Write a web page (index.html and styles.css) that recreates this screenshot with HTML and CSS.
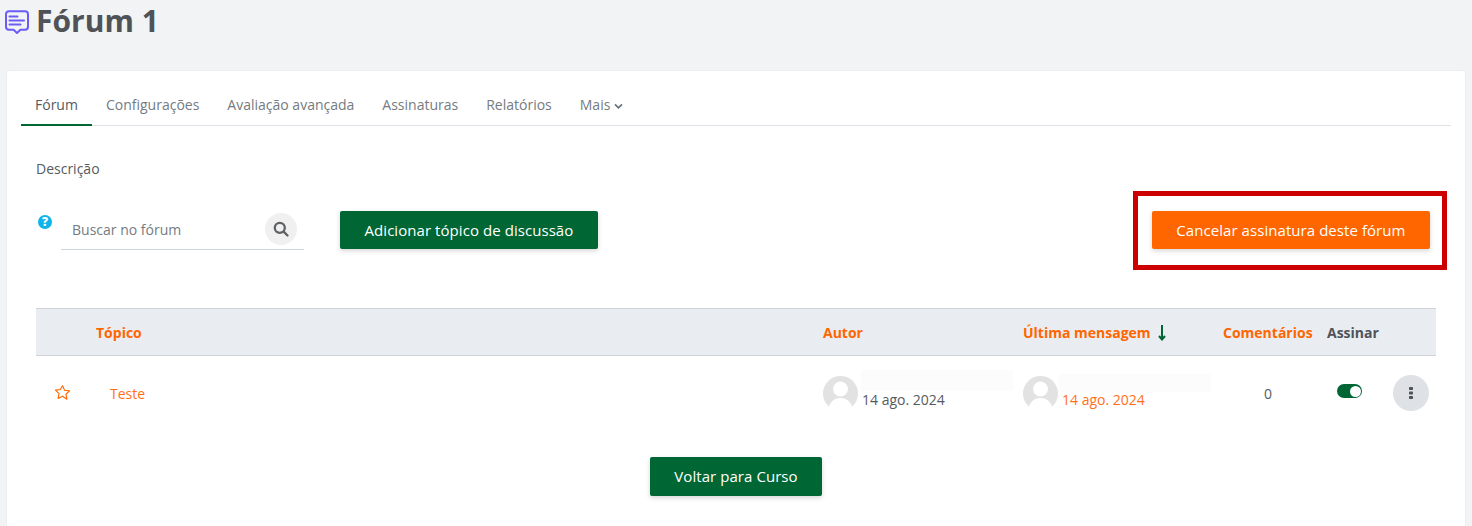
FILE: index.html
```html
<!DOCTYPE html>
<html lang="pt-BR">
<head>
<meta charset="utf-8">
<title>Fórum 1</title>
<link rel="stylesheet" href="styles.css">
</head>
<body>
<header class="page-head">
  <svg class="forum-icon" viewBox="0 0 24 24" width="24" height="24" fill="none" stroke="#6a5cf5" stroke-width="2" stroke-linejoin="round" stroke-linecap="round">
    <path d="M4 1.200h16a3 3 0 0 1 3 3v12.600a3 3 0 0 1-3 3h-4.600L12 23l-3.400-3.200H4a3 3 0 0 1-3-3V4.200a3 3 0 0 1 3-3z"/>
    <path d="M4.500 6.500h8M4.500 10.500h14.500M4.500 14.500h11"/>
  </svg>
  <h1 class="page-title">Fórum 1</h1>
</header>
<main class="card">
  <nav class="tabs">
    <a class="tab tab-active">Fórum</a>
    <a class="tab">Configurações</a>
    <a class="tab">Avaliação avançada</a>
    <a class="tab">Assinaturas</a>
    <a class="tab">Relatórios</a>
    <a class="tab">Mais
      <svg class="caret" viewBox="0 0 10 8" width="9" height="7" fill="none" stroke="#6a737b" stroke-width="2"><path d="M1 1.500l4 4 4-4"/></svg>
    </a>
  </nav>
  <div class="content">
    <p class="description">Descrição</p>
    <div class="toolbar">
      <div class="help">?</div>
      <div class="search">
        <span class="search-label">Buscar no fórum</span>
        <span class="search-btn">
          <svg viewBox="0 0 16 16" width="16" height="16" fill="none" stroke="#5f6265" stroke-width="2.300" stroke-linecap="round"><circle cx="6.800" cy="6.800" r="5"/><path d="M10.600 10.600L14.500 14.500"/></svg>
        </span>
      </div>
      <a class="btn btn-green btn-add">Adicionar tópico de discussão</a>
      <div class="subscribe-wrap">
        <a class="btn btn-orange">Cancelar assinatura deste fórum</a>
        <div class="highlight"></div>
      </div>
    </div>
    <section class="table">
      <div class="table-row table-head">
        <span></span>
        <span class="th">Tópico</span>
        <span class="th">Autor</span>
        <span class="th">Última mensagem
          <svg class="sort" viewBox="0 0 10 16" width="10" height="16" fill="none" stroke="#006633" stroke-width="2"><path d="M5 0v14.500M2 11l3 3.500 3-3.500"/></svg>
        </span>
        <span class="th">Comentários</span>
        <span class="th th-plain">Assinar</span>
        <span></span>
      </div>
      <div class="table-row table-body">
        <span class="star-cell">
          <svg viewBox="0 0 24 24" width="17" height="17" fill="none" stroke="#ff6600" stroke-width="1.600" stroke-linejoin="round"><path d="M12 2.500l3 6.300 6.900.9-5 4.800 1.300 6.900L12 17.200l-6.200 3.200 1.300-6.900-5-4.800 6.900-.9z"/></svg>
        </span>
        <a class="topic">Teste</a>
        <div class="person">
          <svg class="avatar" viewBox="0 0 35 35" width="35" height="35"><circle cx="17.500" cy="17.500" r="17.500" fill="#e2e2e2"/><circle cx="17.500" cy="13" r="7.500" fill="#fff"/><path d="M5 35c1-9 6-13 12.500-13S29 26 30 35z" fill="#fff"/></svg>
          <div class="person-text">
            <div class="redacted redacted-a"></div>
            <div class="date">14 ago. 2024</div>
          </div>
        </div>
        <div class="person">
          <svg class="avatar" viewBox="0 0 35 35" width="35" height="35"><circle cx="17.500" cy="17.500" r="17.500" fill="#e2e2e2"/><circle cx="17.500" cy="13" r="7.500" fill="#fff"/><path d="M5 35c1-9 6-13 12.500-13S29 26 30 35z" fill="#fff"/></svg>
          <div class="person-text">
            <div class="redacted redacted-b"></div>
            <a class="date date-link">14 ago. 2024</a>
          </div>
        </div>
        <span class="count">0</span>
        <span class="toggle-cell"><span class="toggle"><span class="knob"></span></span></span>
        <span class="kebab">
          <svg viewBox="0 0 4 12" width="4" height="12" fill="#4f5358"><rect width="4" height="3" rx=".8"/><rect y="4.500" width="4" height="3" rx=".8"/><rect y="9" width="4" height="3" rx=".8"/></svg>
        </span>
      </div>
    </section>
    <div class="back">
      <a class="btn btn-green btn-back">Voltar para Curso</a>
    </div>
  </div>
</main>
</body>
</html>
```
FILE: styles.css
```css
* { box-sizing: border-box; }
html, body { margin: 0; height: 526px; overflow: hidden; }
body {
  background: #f2f3f5;
  font-family: "Open Sans", "Liberation Sans", sans-serif;
  font-size: 14px;
  color: #555b61;
}
.page-head {
  height: 70px;
  display: flex;
  align-items: flex-start;
  padding-left: 5px;
}
.forum-icon { margin-top: 10px; flex: none; }
.page-title {
  margin: 0 0 0 7px;
  font-size: 30px;
  line-height: 42px;
  font-weight: 700;
  color: #4f5358;
}
.card {
  margin: 0 6px;
  height: 480px;
  background: #fff;
  border: 1px solid #eceef0;
  border-radius: 4px;
  padding: 14px 14px 0;
}
.tabs {
  display: flex;
  height: 41px;
  border-bottom: 1px solid #dee2e6;
}
.tab {
  padding: 0 14px;
  height: 41px;
  line-height: 40px;
  color: #747b82;
  white-space: nowrap;
}
.tab-active {
  color: #555b61;
  border-bottom: 2px solid #006633;
}
.content { padding: 0 15px; }
.description { margin: 33px 0 0; line-height: 20px; }
.toolbar {
  display: flex;
  align-items: flex-start;
  margin-top: 32px;
  height: 38px;
}
.help {
  width: 14px;
  height: 14px;
  margin: 4px 0 0 2px;
  border-radius: 50%;
  background: #0fb4e8;
  color: #fff;
  font-size: 12px;
  font-weight: 800;
  line-height: 14px;
  text-align: center;
  flex: none;
}
.search {
  margin-left: 9px;
  width: 243px;
  height: 39px;
  padding: 0 7px 0 11px;
  display: flex;
  align-items: center;
  justify-content: space-between;
  border-bottom: 1px solid #ced4da;
  flex: none;
}
.search-label { color: #747b82; margin-top: -2px; }
.search-btn {
  width: 32px;
  height: 32px;
  border-radius: 50%;
  background: #f0f0f0;
  display: flex;
  align-items: center;
  justify-content: center;
  margin-top: -2px;
}
.btn {
  display: block;
  height: 38px;
  line-height: 38px;
  padding: 0 24.500px;
  border-radius: 2px;
  color: #fff;
  font-size: 15px;
  letter-spacing: .06px;
  white-space: nowrap;
  box-shadow: 0 2px 5px rgba(0, 0, 0, .16);
}
.btn-green { background: #006633; }
.btn-orange { background: #ff6600; }
.btn-add { margin-left: 36px; }
.btn-back { height: 39px; }
.subscribe-wrap { position: relative; margin-left: auto; margin-right: 6px; }
.highlight {
  position: absolute;
  left: -19px;
  right: -17px;
  top: -20px;
  height: 79px;
  border: 5px solid #cc0000;
  pointer-events: none;
}
.table { margin-top: 59px; width: 1400px; }
.table-row {
  display: grid;
  grid-template-columns: 60px 727px 200px 200px 104px 66px 43px;
  align-items: center;
}
.table-head {
  height: 48px;
  background: #e9edf1;
  border-top: 1px solid #ced4da;
  border-bottom: 1px solid #ced4da;
}
.th { font-weight: 700; color: #ff6600; white-space: nowrap; }
.th-plain { color: #4f5358; }
.sort { vertical-align: -3px; margin-left: 3px; }
.table-body { height: 74px; }
.star-cell { padding-left: 18px; display: flex; margin-top: -1px; }
.topic { color: #ff6f1a; padding-left: 14px; }
.person { display: flex; align-items: flex-start; height: 56px; margin-top: 9px; }
.avatar { flex: none; margin-top: 6px; }
.person-text { margin-left: 3px; }
.redacted { background: #fcfcfc; height: 21px; width: 152px; }
.redacted-b { width: 153px; height: 18px; margin: 4px 0 -1px -3px; }
.date { margin-left: 1px; line-height: 17px; }
.date-link { display: block; color: #ff6f1a; }
.count { text-align: center; padding-right: 14px; }
.toggle-cell { padding-left: 10px; display: flex; margin-top: -4px; }
.toggle {
  width: 25px;
  height: 14px;
  border-radius: 7px;
  background: #006633;
  display: flex;
  align-items: center;
  justify-content: flex-end;
  padding-right: 1px;
}
.knob { width: 11px; height: 11px; border-radius: 50%; background: #fff; }
.kebab {
  width: 36px;
  height: 36px;
  border-radius: 50%;
  background: #dee2e6;
  display: flex;
  align-items: center;
  justify-content: center;
}
.back { display: flex; justify-content: center; margin-top: 27px; }
```
